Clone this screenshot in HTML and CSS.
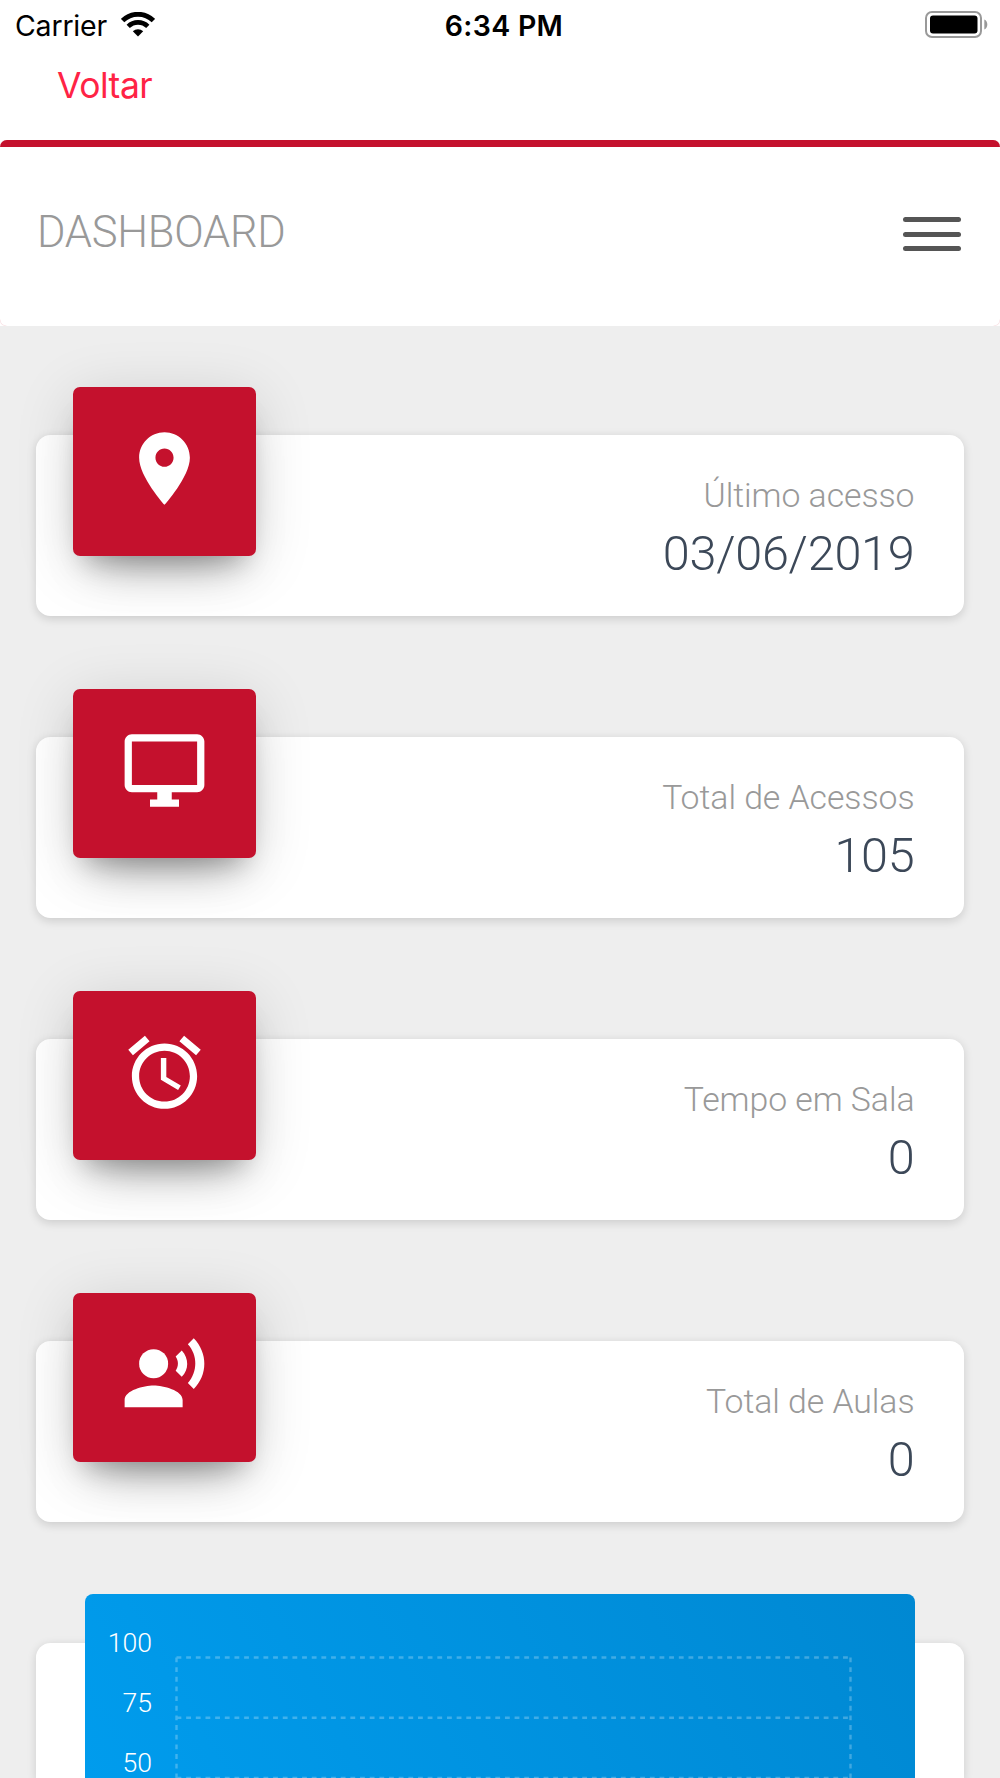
FILE: index.html
```html
<!DOCTYPE html>
<html lang="pt-br">
<head>
<meta charset="utf-8">
<title>Dashboard</title>
<link rel="stylesheet" href="styles.css">
</head>
<body>
<div class="statusbar">
  <div class="carrier">
    <span>Carrier</span>
    <svg class="wifi" width="34" height="25" viewBox="0 0 34 25">
      <path d="M1.6 8.6a21.8 21.8 0 0 1 30.8 0" fill="none" stroke="#000" stroke-width="4.8"/>
      <path d="M7.2 14.4a14 14 0 0 1 19.6 0" fill="none" stroke="#000" stroke-width="4.6"/>
      <path d="M17 24.5l-5.2-5.2a7.5 7.5 0 0 1 10.4 0z"/>
    </svg>
  </div>
  <div class="time">6:34 PM</div>
  <div class="power">
    <svg width="64" height="28" viewBox="0 0 64 28">
      <rect x="1" y="1" width="55" height="25" rx="6" fill="none" stroke="#999" stroke-width="2"/>
      <rect x="5" y="4.5" width="47.5" height="18" rx="3"/>
      <path d="M59.3 8.5c4 1.5 4 8.5 0 10z" fill="#999"/>
    </svg>
  </div>
</div>
<div class="topbar"><a href="#" class="voltar">Voltar</a></div>

<div class="navwrap">
  <nav class="navbar">
    <span class="navbar-brand">DASHBOARD</span>
    <div class="toggler">
      <span class="icon-bar"></span>
      <span class="icon-bar"></span>
      <span class="icon-bar"></span>
    </div>
  </nav>
</div>

<div class="content">
  <div class="card">
    <div class="card-icon">
      <svg viewBox="0 0 24 24"><path d="M12 2C8.13 2 5 5.13 5 9c0 5.25 7 13 7 13s7-7.75 7-13c0-3.87-3.13-7-7-7zm0 9.5c-1.38 0-2.5-1.12-2.5-2.5s1.12-2.5 2.5-2.5 2.5 1.12 2.5 2.5-1.12 2.5-2.5 2.5z"/></svg>
    </div>
    <div class="card-text">
      <p class="card-category">Último acesso</p>
      <h3 class="card-title">03/06/2019</h3>
    </div>
  </div>

  <div class="card">
    <div class="card-icon">
      <svg viewBox="0 0 24 24"><path d="M21 2H3c-1.1 0-2 .9-2 2v12c0 1.1.9 2 2 2h7v2H8v2h8v-2h-2v-2h7c1.1 0 2-.9 2-2V4c0-1.1-.9-2-2-2zm0 14H3V4h18v12z"/></svg>
    </div>
    <div class="card-text">
      <p class="card-category">Total de Acessos</p>
      <h3 class="card-title">105</h3>
    </div>
  </div>

  <div class="card">
    <div class="card-icon">
      <svg viewBox="0 0 24 24"><path d="M22 5.72l-4.6-3.86-1.29 1.53 4.6 3.86L22 5.72zM7.88 3.39L6.6 1.86 2 5.71l1.29 1.53 4.59-3.85zM12.5 8H11v6l4.75 2.85.75-1.23-4-2.37V8zM12 4c-4.97 0-9 4.03-9 9s4.02 9 9 9c4.97 0 9-4.03 9-9s-4.03-9-9-9zm0 16c-3.87 0-7-3.13-7-7s3.13-7 7-7 7 3.13 7 7-3.13 7-7 7z"/></svg>
    </div>
    <div class="card-text">
      <p class="card-category">Tempo em Sala</p>
      <h3 class="card-title">0</h3>
    </div>
  </div>

  <div class="card">
    <div class="card-icon">
      <svg viewBox="0 0 24 24"><circle cx="9" cy="9" r="4"/><path d="M9 15c-2.67 0-8 1.34-8 4v2h16v-2c0-2.66-5.33-4-8-4zM16.76 5.36l-1.68 1.69c.84 1.18.84 2.71 0 3.89l1.68 1.69c2.02-2.02 2.02-5.07 0-7.27zM20.07 2l-1.63 1.63c2.77 3.02 2.77 7.56 0 10.74L20.07 16c3.9-3.89 3.91-9.95 0-14z"/></svg>
    </div>
    <div class="card-text">
      <p class="card-category">Total de Aulas</p>
      <h3 class="card-title">0</h3>
    </div>
  </div>

  <div class="card card-chart">
    <div class="chart">
      <div class="labels">
        <span>100</span>
        <span>75</span>
        <span>50</span>
      </div>
      <svg class="grid" width="677" height="122" viewBox="0 0 677 122">
        <path d="M1.5 1.5H675.5M1.5 61.7H675.5M1.5 121.9H675.5M1.5 1.5V122M675.5 1.5V122"/>
      </svg>
    </div>
  </div>
</div>
</body>
</html>
```

FILE: styles.css
```css
* {box-sizing:border-box;}
body {margin:0;height:1778px;overflow:hidden;background:#eee;font-family:Roboto,"Liberation Sans",sans-serif;font-weight:300;}

/* status bar */
.statusbar {display:grid;grid-template-columns:1fr auto 1fr;height:48px;background:#fff;font-family:Inter,sans-serif;font-size:28.5px;line-height:51px;color:#000;}
.carrier {display:flex;padding-left:15px;font-weight:400;letter-spacing:-.2px;}
.wifi {margin:12px 0 0 14px;}
.time {padding-left:8px;font-weight:600;letter-spacing:.3px;}
.power {display:flex;justify-content:flex-end;padding:11px 11px 0 0;}

.topbar {height:92px;padding-left:57px;background:#fff;}
.voltar {color:#ff2345;font-family:Inter,sans-serif;font-size:35.5px;font-weight:400;line-height:76px;letter-spacing:-.5px;text-decoration:none;}

.navwrap {background:#fff;height:186px;overflow:hidden;}
.navbar {display:flex;justify-content:space-between;height:186px;padding:0 39px 0 37px;background:#fff;border-top:7px solid #c4112d;border-radius:7px;box-shadow:0 0 1px rgba(196,17,45,.4);}
.navbar-brand {font-size:43.5px;line-height:172px;letter-spacing:-.25px;color:#999;}
.toggler {display:flex;flex-direction:column;gap:9.5px;padding-top:70.3px;}
.icon-bar {width:58px;height:5px;border-radius:3px;background:#555;}

/* cards */
.content {height:1452px;padding:109px 36px 0;overflow:hidden;}
.card {display:flex;justify-content:space-between;height:181px;margin-bottom:121px;padding:0 49.5px 0 36.5px;background:#fff;border-radius:14.5px;box-shadow:0 2.4px 9.7px rgba(0,0,0,.14);}
.card-icon {width:183.5px;height:169px;margin-top:-48.5px;padding:38.5px 48px;background:#c4112d;border-radius:7px;box-shadow:0 29px 48px -24px rgba(0,0,0,.34),0 9.7px 60px 0 rgba(0,0,0,.14),0 17px 24px -12px rgba(0,0,0,.22);}
.card-icon svg {display:block;width:87px;height:87px;fill:#fff;}
.card-text {text-align:right;padding-top:36px;}
.card-category {margin:0;font-size:33.8px;line-height:50px;letter-spacing:-.05px;color:#999;}
.card-title {margin:0;font-size:48.6px;line-height:66px;letter-spacing:-.25px;font-weight:300;color:#3c4858;}

/* chart */
.card-chart {height:136px;margin-bottom:0;padding:0 48.5px;border-radius:14.5px 14.5px 0 0;}
.chart {display:flex;width:830.5px;height:185px;margin-top:-49px;padding-top:33px;border-radius:8px 8px 0 0;background:linear-gradient(60deg,#009ced,#0088d2);}
.labels {width:67.5px;text-align:right;font-size:26.6px;color:#fff;}
.labels span {display:block;height:60.2px;line-height:32px;}
.labels span:last-child {height:32px;}
.grid {margin:29px 0 0 22.5px;fill:none;stroke:rgba(255,255,255,.25);stroke-width:2.4;stroke-dasharray:4.83;}
```
